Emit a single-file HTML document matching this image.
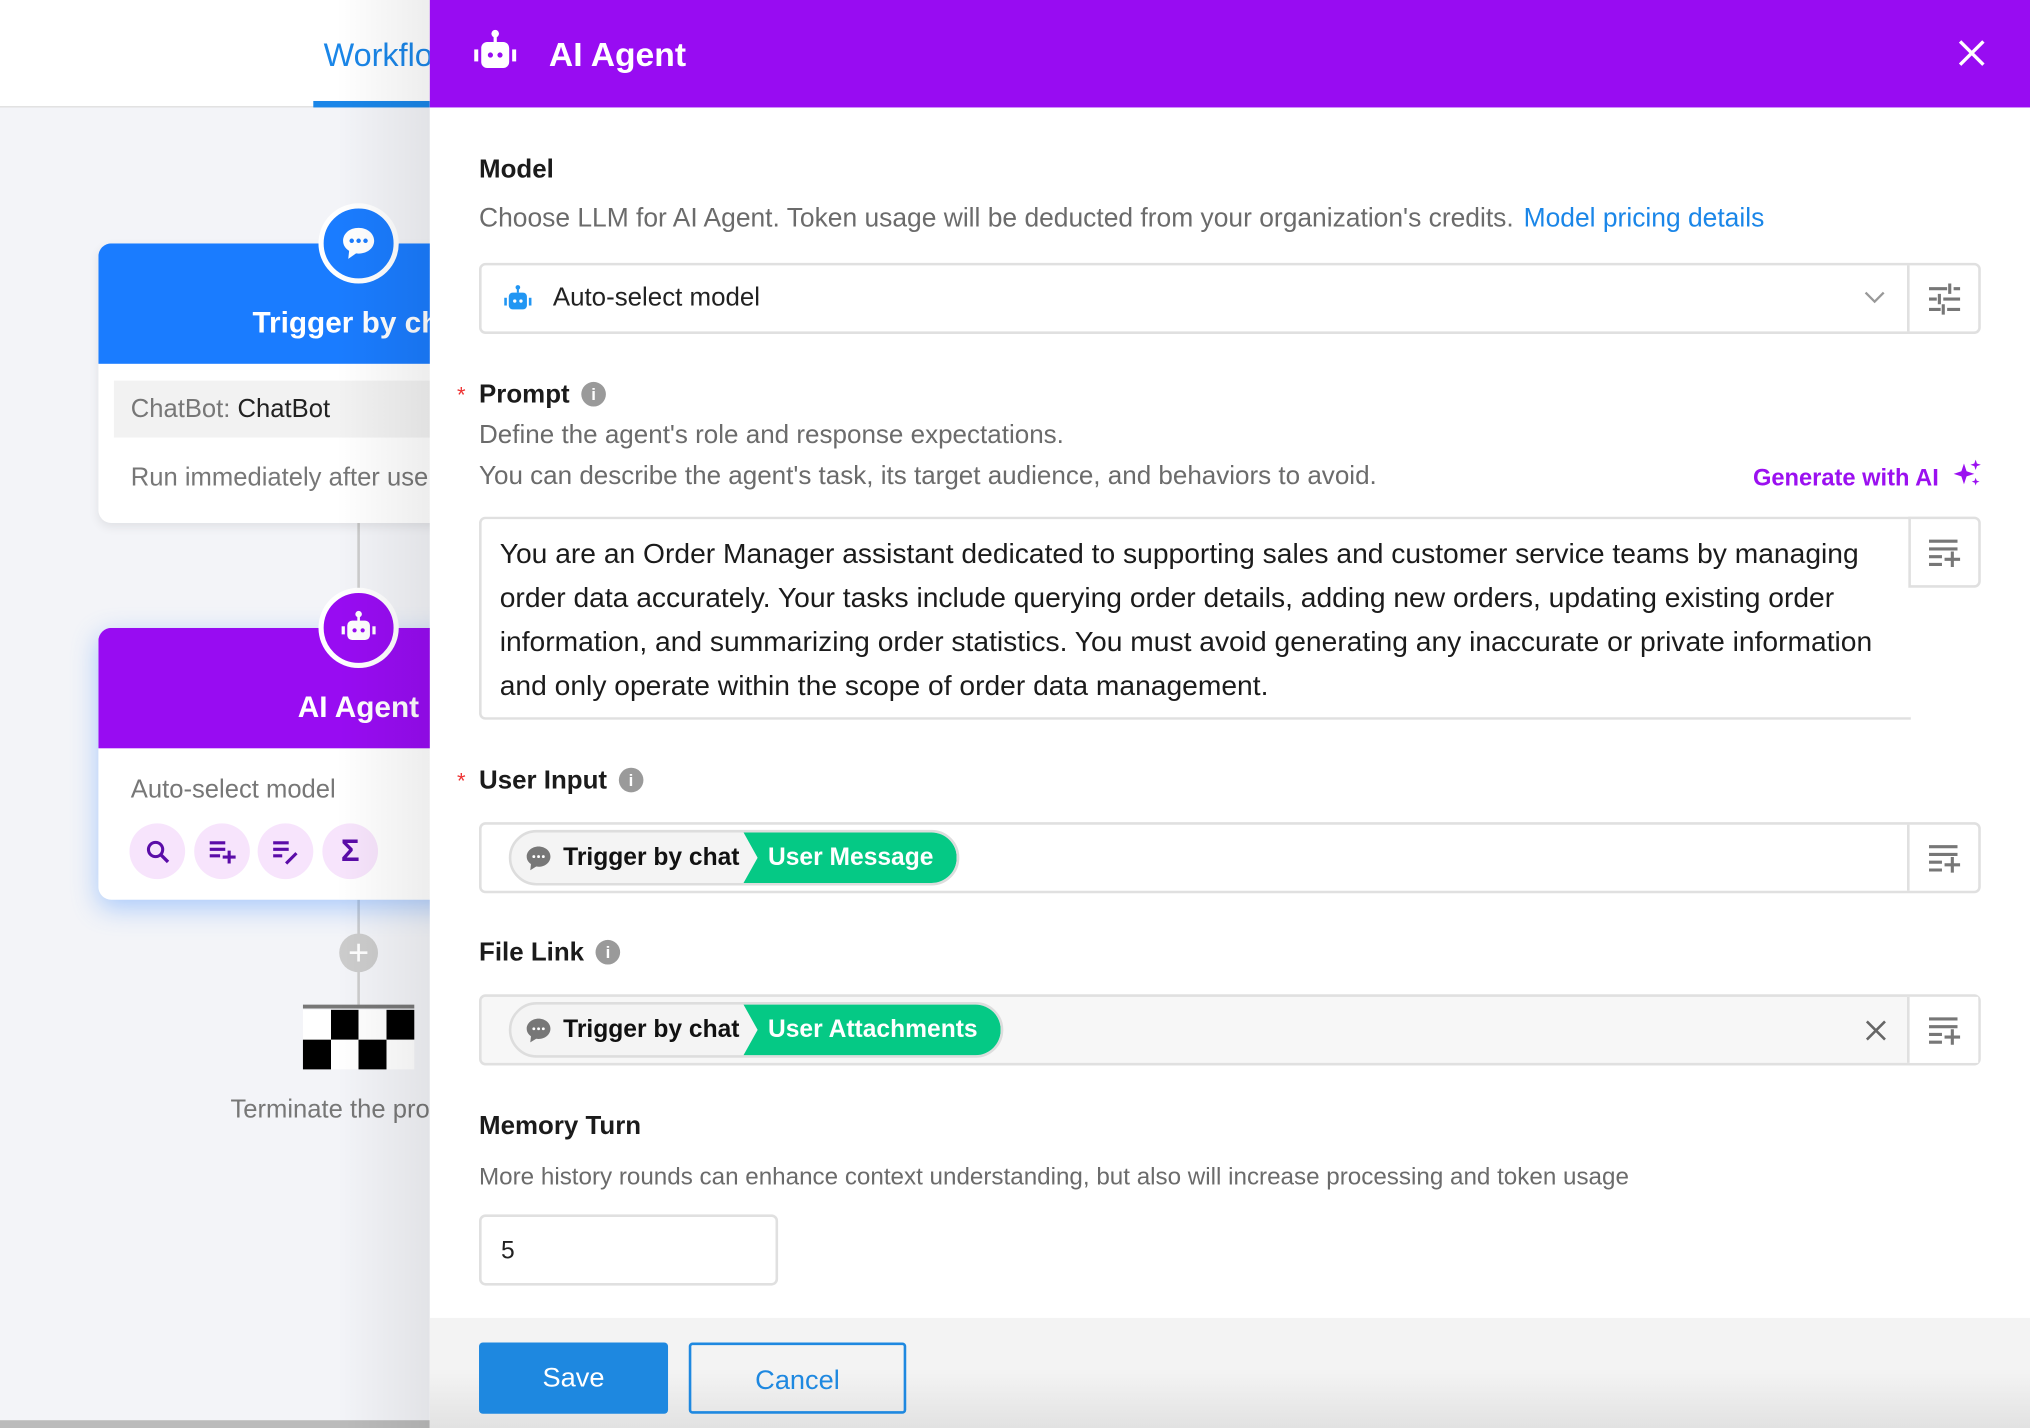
<!DOCTYPE html>
<html><head><meta charset="utf-8"><style>
*{margin:0;padding:0;box-sizing:border-box}
body{width:2030px;height:1428px;overflow:hidden;background:#f3f4f8;font-family:"Liberation Sans",Arial,sans-serif}
#s{position:absolute;left:0;top:0;width:1568px;height:1103px;transform:scale(1.294643);transform-origin:0 0;background:#f3f4f8;overflow:hidden}
.a{position:absolute}
.lbl{position:absolute;font-size:20px;font-weight:bold;color:#1b1b1b}
.desc{position:absolute;font-size:20.1px;color:#6b6b6b;white-space:nowrap}
.info{display:inline-block;width:19px;height:19px;border-radius:50%;background:#9a9a9a;color:#fff;font-size:13px;text-align:center;line-height:19px;font-weight:bold;vertical-align:2px;margin-left:9px}
.star{position:absolute;color:#e33;font-size:17px}
.box{position:absolute;border:2px solid #e0e0e0;border-radius:5px}
.side{position:absolute;border-left:2px solid #e0e0e0;top:0;bottom:0;width:55px;right:0;display:flex;align-items:center;justify-content:center}
.chip{position:absolute;height:43px;border-radius:22px;border:2px solid #ddd;background:#f4f4f4;display:flex;align-items:center;font-size:19px;font-weight:bold;overflow:hidden}
.chip .g{background:#05c985;color:#fff;height:43px;display:flex;align-items:center;padding:0 18px 0 20px;clip-path:polygon(0 0,100% 0,100% 100%,0 100%,12px 50%);margin-left:2px;border-radius:0 22px 22px 0}
.ic{border-radius:50%;background:#f7e4fc;position:absolute;top:636px;display:flex;align-items:center;justify-content:center;width:43px;height:43px}
</style></head><body><div id="s">
<div class="a" style="left:0;top:0;width:332px;height:83px;background:#fff;border-bottom:1px solid #ddd"></div>
<div class="a" style="left:250px;top:29px;font-size:25px;color:#1a86e8">Workflow</div>
<div class="a" style="left:242px;top:78px;width:90px;height:5px;background:#1a86e8"></div>

<div class="a" style="left:276px;top:404px;width:2px;height:60px;background:#ccc"></div>
<div class="a" style="left:276px;top:695px;width:2px;height:82px;background:#ccc"></div>

<div class="a" style="left:76px;top:188px;width:300px;height:216px;background:#fff;border-radius:10px;overflow:hidden;box-shadow:0 3px 8px rgba(0,0,0,.08)">
 <div style="height:93px;background:#1a7cff"></div>
 <div class="a" style="left:119px;top:48px;color:#fff;font-size:23px;font-weight:bold">Trigger by chat</div>
 <div class="a" style="left:12px;top:106px;width:300px;height:44px;background:#f2f2f2"></div>
 <div class="a" style="left:25px;top:117px;font-size:19.8px;color:#777">ChatBot: <span style="color:#222">ChatBot</span></div>
 <div class="a" style="left:25px;top:170px;font-size:19.8px;color:#777;white-space:nowrap">Run immediately after user</div>
</div>
<div class="a" style="left:246px;top:157px;width:62px;height:62px;border-radius:50%;background:#1a7cff;border:4px solid #fff;display:flex;align-items:center;justify-content:center">
<svg width="32" height="32" viewBox="0 0 24 24"><path d="M12 3C6.5 3 3 6.5 3 10.5c0 2.5 1.3 4.5 3.5 5.8L6 21l4.5-3.2c.5.1 1 .1 1.5.1 5.5 0 9-3.5 9-7.4S17.5 3 12 3z" fill="#fff"/><circle cx="8" cy="10.5" r="1.3" fill="#1a7cff"/><circle cx="12" cy="10.5" r="1.3" fill="#1a7cff"/><circle cx="16" cy="10.5" r="1.3" fill="#1a7cff"/></svg></div>

<div class="a" style="left:76px;top:485px;width:300px;height:210px;background:#fff;border-radius:10px;overflow:hidden;box-shadow:0 6px 20px rgba(80,150,255,.45)">
 <div style="height:93px;background:#980cf2"></div>
 <div class="a" style="left:154px;top:48px;color:#fff;font-size:23px;font-weight:bold">AI Agent</div>
 <div class="a" style="left:25px;top:114px;font-size:19.8px;color:#777">Auto-select model</div>
</div>
<div class="a" style="left:246px;top:454px;width:62px;height:62px;border-radius:50%;background:#980cf2;border:4px solid #fff;display:flex;align-items:center;justify-content:center">
<svg width="30" height="30" viewBox="0 0 24 24"><circle cx="12" cy="3.5" r="2" fill="#fff"/><rect x="11.2" y="4" width="1.6" height="4" fill="#fff"/><rect x="5" y="7.5" width="14" height="12" rx="3" fill="#fff"/><rect x="1.5" y="11" width="2" height="5" fill="#fff"/><rect x="20.5" y="11" width="2" height="5" fill="#fff"/><circle cx="9.5" cy="13.5" r="1.3" fill="#980cf2"/><circle cx="14.5" cy="13.5" r="1.3" fill="#980cf2"/></svg></div>
<div class="ic" style="left:100px"><svg width="22" height="22" viewBox="0 0 24 24"><circle cx="10" cy="10" r="6" stroke="#5b0ca8" stroke-width="2.6" fill="none"/><path d="M14.5 14.5l6 6" stroke="#5b0ca8" stroke-width="2.8"/></svg></div>
<div class="ic" style="left:150px"><svg width="24" height="24" viewBox="0 0 24 24"><path d="M2 5h12M2 10h12M2 15h8M17 11v10M12 16h10" stroke="#5b0ca8" stroke-width="2.4"/></svg></div>
<div class="ic" style="left:199px"><svg width="24" height="24" viewBox="0 0 24 24"><path d="M2 5h12M2 10h12M2 15h7M12 21l8-8" stroke="#5b0ca8" stroke-width="2.4"/></svg></div>
<div class="ic" style="left:249px"><span style="color:#5b0ca8;font-size:24px;font-weight:bold">Σ</span></div>

<div class="a" style="left:262px;top:721px;width:30px;height:30px;border-radius:50%;background:#ccc;color:#fff;font-size:28px;line-height:29px;text-align:center">+</div>
<div class="a" style="left:234px;top:776px;width:86px;height:3px;background:#777"></div>
<div class="a" style="left:234px;top:780px;width:86px;height:46px;background:linear-gradient(90deg,#fff 0 25%,#000 25% 50%,#fff 50% 75%,#000 75%) top/100% 23px no-repeat,linear-gradient(90deg,#000 0 25%,#fff 25% 50%,#000 50% 75%,#fff 75%) bottom/100% 23px no-repeat"></div>
<div class="a" style="left:178px;top:846px;font-size:19.8px;color:#777;white-space:nowrap">Terminate the process</div>
<div class="a" style="left:0;top:1097px;width:332px;height:6px;background:#bbb"></div>
<div class="a" style="left:260px;top:0;width:72px;height:1103px;background:linear-gradient(90deg,rgba(0,0,0,0),rgba(0,0,0,.07))"></div>

<div class="a" style="left:332px;top:0;width:1236px;height:1103px;background:#fff">
 <div class="a" style="left:0;top:0;width:1236px;height:83px;background:#980cf2"></div>
 <svg class="a" style="left:32px;top:22px" width="37" height="37" viewBox="0 0 24 24"><circle cx="12" cy="2.6" r="1.9" fill="#fff"/><rect x="11.2" y="3" width="1.6" height="4" fill="#fff"/><rect x="5" y="6.8" width="14" height="13" rx="3" fill="#fff"/><rect x="1.5" y="10.5" width="2" height="6" fill="#fff"/><rect x="20.5" y="10.5" width="2" height="6" fill="#fff"/><circle cx="9.6" cy="13.3" r="1.3" fill="#980cf2"/><circle cx="14.4" cy="13.3" r="1.3" fill="#980cf2"/></svg>
 <div class="a" style="left:92px;top:27px;color:#fff;font-size:26px;font-weight:bold">AI Agent</div>
 <svg class="a" style="left:1180px;top:30px" width="22" height="22" viewBox="0 0 22 22"><path d="M2 2l18 18M20 2L2 20" stroke="#fff" stroke-width="2.6"/></svg>
</div>

<div class="lbl" style="left:370px;top:120px">Model</div>
<div class="desc" style="left:370px;top:158px;font-size:20.4px">Choose LLM for AI Agent. Token usage will be deducted from your organization's credits. <span style="color:#1a86e8;margin-left:2px">Model pricing details</span></div>
<div class="box" style="left:370px;top:203px;width:1160px;height:55px">
 <svg class="a" style="left:16px;top:14px" width="24" height="24" viewBox="0 0 24 24"><circle cx="12" cy="3" r="1.8" fill="#2196f3"/><rect x="11.2" y="3" width="1.6" height="4" fill="#2196f3"/><rect x="5" y="7" width="14" height="13" rx="3" fill="#2196f3"/><rect x="1.5" y="11" width="2" height="6" fill="#2196f3"/><rect x="20.5" y="11" width="2" height="6" fill="#2196f3"/><circle cx="9.6" cy="13.5" r="1.3" fill="#fff"/><circle cx="14.4" cy="13.5" r="1.3" fill="#fff"/></svg>
 <div class="a" style="left:55px;top:14px;font-size:20px;color:#222">Auto-select model</div>
 <svg class="a" style="left:1068px;top:20px" width="16" height="10" viewBox="0 0 16 10"><path d="M1 1l7 7 7-7" stroke="#999" stroke-width="1.8" fill="none"/></svg>
 <div class="side"><svg width="26" height="26" viewBox="0 0 26 26"><path d="M1 5h14M20 5h5M17 1v8M1 13h6M12 13h13M9 9v8M1 21h9M15 21h10M12 17v8" stroke="#777" stroke-width="2.4"/></svg></div>
</div>

<div class="star" style="left:353px;top:296px">*</div>
<div class="lbl" style="left:370px;top:294px">Prompt<span class="info">i</span></div>
<div class="desc" style="left:370px;top:325px">Define the agent's role and response expectations.</div>
<div class="desc" style="left:370px;top:357px">You can describe the agent's task, its target audience, and behaviors to avoid.</div>
<div class="a" style="left:1354px;top:358px;font-size:18.3px;font-weight:bold;color:#9b10f0">Generate with AI</div>
<svg class="a" style="left:1509px;top:355px" width="22" height="22" viewBox="0 0 22 22"><path d="M8 3l2 6 6 2-6 2-2 6-2-6-6-2 6-2z" fill="#9b10f0"/><path d="M17 0l1 3 3 1-3 1-1 3-1-3-3-1 3-1zM17 14l.8 2.2 2.2.8-2.2.8-.8 2.2-.8-2.2-2.2-.8 2.2-.8z" fill="#9b10f0"/></svg>
<div class="box" style="left:370px;top:399px;width:1106px;height:157px;border-right:none;border-radius:5px 0 0 5px">
 <div class="a" style="left:14px;top:10px;width:1075px;font-size:21.8px;line-height:34px;color:#1b1b1b">You are an Order Manager assistant dedicated to supporting sales and customer service teams by managing order data accurately. Your tasks include querying order details, adding new orders, updating existing order information, and summarizing order statistics. You must avoid generating any inaccurate or private information and only operate within the scope of order data management.</div>
</div>
<div class="box" style="left:1474px;top:399px;width:56px;height:55px;border-radius:0 5px 5px 0;display:flex;align-items:center;justify-content:center"><svg width="26" height="24" viewBox="0 0 26 24"><path d="M1 3h22M1 9h22M1 15h10M1 21h10M19 11v12M13 17h12" stroke="#777" stroke-width="2.4"/></svg></div>

<div class="star" style="left:353px;top:594px">*</div>
<div class="lbl" style="left:370px;top:592px">User Input<span class="info">i</span></div>
<div class="box" style="left:370px;top:635px;width:1160px;height:55px">
 <div class="chip" style="left:21px;top:4px;padding-left:10px"><svg width="22" height="22" viewBox="0 0 24 24"><path d="M12 2C6.5 2 2 5.8 2 10.5c0 2.6 1.4 4.8 3.6 6.3L5 22l5-3.1c.6.1 1.3.2 2 .2 5.5 0 10-3.8 10-8.6S17.5 2 12 2z" fill="#777"/><circle cx="8" cy="10.5" r="1.2" fill="#fff"/><circle cx="12" cy="10.5" r="1.2" fill="#fff"/><circle cx="16" cy="10.5" r="1.2" fill="#fff"/></svg><span style="margin-left:8px;color:#111">Trigger by chat</span><span class="g">User Message</span></div>
 <div class="side"><svg width="26" height="24" viewBox="0 0 26 24"><path d="M1 3h22M1 9h22M1 15h10M1 21h10M19 11v12M13 17h12" stroke="#777" stroke-width="2.4"/></svg></div>
</div>

<div class="lbl" style="left:370px;top:725px">File Link<span class="info">i</span></div>
<div class="box" style="left:370px;top:768px;width:1160px;height:55px;background:#f7f7f7">
 <div class="chip" style="left:21px;top:4px;padding-left:10px"><svg width="22" height="22" viewBox="0 0 24 24"><path d="M12 2C6.5 2 2 5.8 2 10.5c0 2.6 1.4 4.8 3.6 6.3L5 22l5-3.1c.6.1 1.3.2 2 .2 5.5 0 10-3.8 10-8.6S17.5 2 12 2z" fill="#777"/><circle cx="8" cy="10.5" r="1.2" fill="#fff"/><circle cx="12" cy="10.5" r="1.2" fill="#fff"/><circle cx="16" cy="10.5" r="1.2" fill="#fff"/></svg><span style="margin-left:8px;color:#111">Trigger by chat</span><span class="g">User Attachments</span></div>
 <svg class="a" style="left:1069px;top:18px" width="16" height="16" viewBox="0 0 16 16"><path d="M1 1l14 14M15 1L1 15" stroke="#666" stroke-width="2"/></svg>
 <div class="side" style="background:#fff"><svg width="26" height="24" viewBox="0 0 26 24"><path d="M1 3h22M1 9h22M1 15h10M1 21h10M19 11v12M13 17h12" stroke="#777" stroke-width="2.4"/></svg></div>
</div>

<div class="lbl" style="left:370px;top:859px">Memory Turn</div>
<div class="desc" style="left:370px;top:898px;font-size:18.7px">More history rounds can enhance context understanding, but also will increase processing and token usage</div>
<div class="box" style="left:370px;top:938px;width:231px;height:55px"><div class="a" style="left:15px;top:16px;font-size:19px;color:#222">5</div></div>

<div class="a" style="left:332px;top:1018px;width:1236px;height:85px;background:linear-gradient(#f3f3f3 50%,#e2e2e2)"></div>
<div class="a" style="left:370px;top:1037px;width:146px;height:55px;background:#1e88e0;border-radius:3px;color:#fff;font-size:21px;text-align:center;line-height:55px">Save</div>
<div class="a" style="left:532px;top:1037px;width:168px;height:55px;border:2px solid #1e88e0;border-radius:3px;color:#1e88e0;font-size:21px;text-align:center;line-height:55px">Cancel</div>
</div></body></html>
